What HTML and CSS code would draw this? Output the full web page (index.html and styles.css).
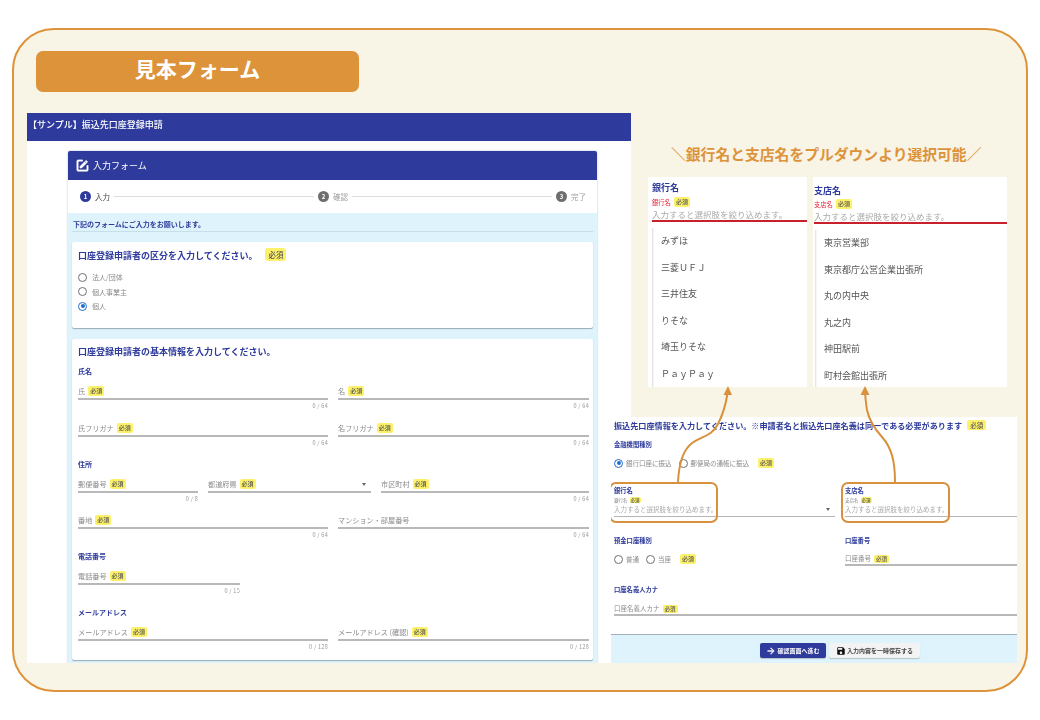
FILE: index.html
```html
<!DOCTYPE html>
<html lang="ja">
<head>
    <meta charset="UTF-8">
    <title>見本フォーム</title>
    <link rel="stylesheet" href="styles.css">
</head>
<body>
    <div class="slide">
        <h1 class="slide-title">見本フォーム</h1>

        <!-- 左: 入力フォーム全体 -->
        <section class="shot form-shot">
            <header class="app-bar">【サンプル】振込先口座登録申請</header>
            <div class="app-body">
                <div class="form-card">
                    <div class="form-card-head">
                        <svg viewBox="0 0 24 24" fill="currentColor" stroke="currentColor" stroke-width="1"><path d="M5,3C3.89,3 3,3.89 3,5V19A2,2 0 0,0 5,21H19A2,2 0 0,0 21,19V12H19V19H5V5H12V3H5M17.78,4C17.61,4 17.43,4.07 17.3,4.2L16.08,5.41L18.58,7.91L19.8,6.7C20.06,6.44 20.06,6 19.8,5.75L18.25,4.2C18.12,4.07 17.95,4 17.78,4M15.37,6.12L8,13.5V16H10.5L17.87,8.62L15.37,6.12Z"/></svg>
                        <span>入力フォーム</span>
                    </div>
                    <div class="stepper">
                        <span class="step-no active">1</span><span class="step-label active">入力</span>
                        <span class="step-line"></span>
                        <span class="step-no">2</span><span class="step-label">確認</span>
                        <span class="step-line"></span>
                        <span class="step-no">3</span><span class="step-label">完了</span>
                    </div>
                    <div class="form-area">
                        <p class="form-lead">下記のフォームにご入力をお願いします。</p>

                        <div class="sheet sheet-kind">
                            <h2 class="sheet-title">口座登録申請者の区分を入力してください。<span class="badge badge-lg">必須</span></h2>
                            <div class="radio-stack">
                                <label class="radio"><i class="dot"></i>法人/団体</label>
                                <label class="radio"><i class="dot"></i>個人事業主</label>
                                <label class="radio"><i class="dot on"></i>個人</label>
                            </div>
                        </div>

                        <div class="sheet sheet-basic">
                            <h2 class="sheet-title">口座登録申請者の基本情報を入力してください。</h2>

                            <h3 class="group-title">氏名</h3>
                            <div class="row row-2">
                                <div class="field"><div class="field-input">氏<span class="badge">必須</span></div><div class="count">0 / 64</div></div>
                                <div class="field"><div class="field-input">名<span class="badge">必須</span></div><div class="count">0 / 64</div></div>
                                <div class="field"><div class="field-input">氏フリガナ<span class="badge">必須</span></div><div class="count">0 / 64</div></div>
                                <div class="field"><div class="field-input">名フリガナ<span class="badge">必須</span></div><div class="count">0 / 64</div></div>
                            </div>

                            <h3 class="group-title">住所</h3>
                            <div class="row row-3">
                                <div class="field"><div class="field-input">郵便番号<span class="badge">必須</span></div><div class="count">0 / 8</div></div>
                                <div class="field"><div class="field-input select">都道府県<span class="badge">必須</span><i class="caret"></i></div></div>
                                <div class="field"><div class="field-input">市区町村<span class="badge">必須</span></div><div class="count">0 / 64</div></div>
                            </div>
                            <div class="row row-2">
                                <div class="field"><div class="field-input">番地<span class="badge">必須</span></div><div class="count">0 / 64</div></div>
                                <div class="field"><div class="field-input">マンション・部屋番号</div><div class="count">0 / 64</div></div>
                            </div>

                            <h3 class="group-title">電話番号</h3>
                            <div class="row row-tel">
                                <div class="field"><div class="field-input">電話番号<span class="badge">必須</span></div><div class="count">0 / 15</div></div>
                            </div>

                            <h3 class="group-title">メールアドレス</h3>
                            <div class="row row-2">
                                <div class="field"><div class="field-input">メールアドレス<span class="badge">必須</span></div><div class="count">0 / 128</div></div>
                                <div class="field"><div class="field-input">メールアドレス (確認)<span class="badge">必須</span></div><div class="count">0 / 128</div></div>
                            </div>
                        </div>
                    </div>
                </div>
            </div>
        </section>

        <p class="caption">＼銀行名と支店名をプルダウンより選択可能／</p>

        <!-- 右上: プルダウン -->
        <section class="shot drop-shot bank-drop">
            <h3 class="drop-title">銀行名</h3>
            <div class="drop-label">銀行名<span class="badge">必須</span></div>
            <div class="drop-input">入力すると選択肢を絞り込めます。</div>
            <ul class="drop-list">
                <li>みずほ</li>
                <li>三菱ＵＦＪ</li>
                <li>三井住友</li>
                <li>りそな</li>
                <li>埼玉りそな</li>
                <li>ＰａｙＰａｙ</li>
            </ul>
        </section>
        <section class="shot drop-shot branch-drop">
            <h3 class="drop-title">支店名</h3>
            <div class="drop-label">支店名<span class="badge">必須</span></div>
            <div class="drop-input">入力すると選択肢を絞り込めます。</div>
            <ul class="drop-list">
                <li>東京営業部</li>
                <li>東京都庁公営企業出張所</li>
                <li>丸の内中央</li>
                <li>丸之内</li>
                <li>神田駅前</li>
                <li>町村会館出張所</li>
            </ul>
        </section>

        <!-- 右下: 振込先口座 -->
        <section class="shot account-shot">
            <h2 class="account-title">振込先口座情報を入力してください。※申請者名と振込先口座名義は同一である必要があります<span class="badge">必須</span></h2>
            <h3 class="mini-title">金融機関種別</h3>
            <div class="radio-line">
                <label class="radio"><i class="dot on"></i>銀行口座に振込</label>
                <label class="radio"><i class="dot"></i>郵便局の通帳に振込</label>
                <span class="badge">必須</span>
            </div>
            <div class="account-grid bank-row">
                <div class="pick">
                    <h3 class="mini-title">銀行名</h3>
                    <div class="pick-label">銀行名<span class="badge">必須</span></div>
                    <div class="pick-input select">入力すると選択肢を絞り込めます。<i class="caret"></i></div>
                </div>
                <div class="pick">
                    <h3 class="mini-title">支店名</h3>
                    <div class="pick-label">支店名<span class="badge">必須</span></div>
                    <div class="pick-input">入力すると選択肢を絞り込めます。</div>
                </div>
            </div>
            <div class="account-grid number-row">
                <div>
                    <h3 class="mini-title">預金口座種別</h3>
                    <div class="radio-line">
                        <label class="radio"><i class="dot"></i>普通</label>
                        <label class="radio"><i class="dot"></i>当座</label>
                        <span class="badge">必須</span>
                    </div>
                </div>
                <div>
                    <h3 class="mini-title">口座番号</h3>
                    <div class="field-input small">口座番号<span class="badge">必須</span></div>
                </div>
            </div>
            <div class="holder-row">
                <h3 class="mini-title">口座名義人カナ</h3>
                <div class="field-input small">口座名義人カナ<span class="badge">必須</span></div>
            </div>
            <div class="account-foot">
                <button class="btn btn-primary">
                    <svg viewBox="0 0 24 24" fill="currentColor" stroke="currentColor" stroke-width="1"><path d="M12 4l-1.41 1.41L16.17 11H4v2h12.17l-5.58 5.59L12 20l8-8z"/></svg>確認画面へ進む
                </button>
                <button class="btn btn-plain">
                    <svg viewBox="0 0 24 24" fill="#111"><path d="M17 3H5c-1.11 0-2 .9-2 2v14c0 1.1.89 2 2 2h14c1.1 0 2-.9 2-2V7l-4-4zm-5 16c-1.66 0-3-1.34-3-3s1.34-3 3-3 3 1.34 3 3-1.34 3-3 3zm3-10H5V5h10v4z"/></svg>入力内容を一時保存する
                </button>
            </div>
            <span class="callout callout-bank"></span>
            <span class="callout callout-branch"></span>
        </section>

        <!-- 吹き出しの矢印 -->
        <svg class="arrows" viewBox="0 0 1040 720" fill="none" stroke="#d8913c" stroke-width="2">
            <path d="M678 482C679 462 683 450 692 443C702 436 712 436 718 424C723 414 726 404 727.500 393"/>
            <path d="M895 482C895 462 892 448 882 437C874 428 869 420 867 410C866 404 865.500 398 865 393"/>
            <path d="M728 386L723.500 395L732 395Z" fill="#d8913c" stroke="none"/>
            <path d="M865 386L860.500 395L869.500 395Z" fill="#d8913c" stroke="none"/>
        </svg>
    </div>
</body>
</html>
```

FILE: styles.css
```css
:root {
    --orange: #dd933a;
    --navy: #2e3b9c;
    --paper: #f8f4e6;
    --sky: #dff3fc;
    --gray: #8a8a8a;
    --yellow: #fdf16a;
}

* {
    margin: 0;
    padding: 0;
    box-sizing: border-box;
}

body {
    background: #fff;
    font-family: "Noto Sans CJK JP", "Noto Sans", sans-serif;
    color: var(--gray);
}

ul {
    list-style: none;
}

/* スライド枠 */
.slide {
    position: relative;
    width: 1016px;
    height: 664px;
    margin: 28px 0 0 12px;
    padding: 21px 0 0 22px;
    background: var(--paper);
    border: 2px solid var(--orange);
    border-radius: 42px;
}

.slide-title {
    width: 323px;
    height: 41px;
    line-height: 35px;
    background: var(--orange);
    border-radius: 7px;
    color: #fff;
    font-size: 21px;
    font-weight: 700;
    text-align: center;
}

/* 貼り付けたスクリーンショットは少しぼけている */
.shot {
    position: absolute;
    background: #fff;
    overflow: hidden;
    filter: blur(0.3px);
}

.form-shot {
    left: 13px;
    top: 83px;
    width: 604px;
    height: 550px;
}

.bank-drop {
    left: 634px;
    top: 147px;
    width: 159px;
    height: 210px;
}

.branch-drop {
    left: 799px;
    top: 147px;
    width: 194px;
    height: 210px;
}

.account-shot {
    left: 597px;
    top: 387px;
    width: 406px;
    height: 246px;
}

.caption {
    position: absolute;
    left: 657px;
    top: 114px;
    font-size: 14.800px;
    line-height: 20px;
    font-weight: 700;
    color: var(--orange);
    white-space: nowrap;
}

.arrows {
    position: absolute;
    left: -14px;
    top: -30px;
    width: 1040px;
    height: 720px;
    pointer-events: none;
}

/* 必須バッジ */
.badge {
    display: inline-block;
    height: 10px;
    line-height: 10px;
    margin-left: 3px;
    padding: 0 2px;
    background: var(--yellow);
    border-radius: 2px;
    color: #555;
    font-size: 6px;
    font-weight: 500;
    letter-spacing: 0;
    vertical-align: 1px;
}

.badge-lg {
    height: 13px;
    line-height: 13px;
    margin-left: 8px;
    padding: 0 3px;
    font-size: 7.500px;
    border-radius: 3px;
}

/* 左のフォーム */
.app-bar {
    height: 28px;
    padding-left: 1px;
    line-height: 24px;
    background: var(--navy);
    color: #fff;
    font-size: 9px;
    font-weight: 500;
}

.app-body {
    padding: 10px 34px 0 41px;
}

.form-card {
    box-shadow: 0 0 2px rgba(46, 59, 156, 0.4);
    border-radius: 2px 2px 0 0;
}

.form-card-head {
    display: flex;
    align-items: center;
    gap: 3px;
    height: 29px;
    padding-left: 7px;
    background: var(--navy);
    border-radius: 2px 2px 0 0;
    color: #fff;
    font-size: 9px;
}

.form-card-head svg {
    width: 15px;
    height: 15px;
}

.stepper {
    display: flex;
    align-items: center;
    height: 33px;
    padding: 0 11px 0 12px;
}

.step-no {
    width: 11px;
    height: 11px;
    line-height: 11px;
    border-radius: 50%;
    background: #6e6e6e;
    color: #fff;
    font-size: 6px;
    font-weight: 700;
    text-align: center;
}

.step-no.active {
    background: var(--navy);
}

.step-label {
    margin-left: 4px;
    font-size: 7.500px;
    color: #a0a0a0;
}

.step-label.active {
    color: #444;
}

.step-line {
    flex: 1;
    height: 1px;
    margin: 0 4px;
    background: #ddd;
}

.form-area {
    height: 500px;
    padding: 0 4px;
    background: var(--sky);
}

.form-lead {
    height: 19px;
    padding-left: 1px;
    line-height: 23px;
    border-bottom: 1px solid #c9dfe8;
    color: var(--navy);
    font-size: 7px;
    font-weight: 700;
}

.sheet {
    padding: 6px 4px 0 6px;
    background: #fff;
    border-radius: 2px;
    box-shadow: 0 1px 1px rgba(60, 80, 100, 0.45);
}

.sheet-kind {
    height: 86px;
    margin-top: 10px;
}

.sheet-basic {
    height: 321px;
    margin-top: 11px;
}

.sheet-title {
    height: 14px;
    line-height: 14px;
    color: var(--navy);
    font-size: 9px;
    font-weight: 700;
}

.radio-stack {
    display: flex;
    flex-direction: column;
    gap: 2.500px;
    margin-top: 9px;
}

.radio {
    display: inline-flex;
    align-items: center;
    gap: 5px;
    height: 12px;
    font-size: 7px;
    color: var(--gray);
}

.dot {
    position: relative;
    width: 9px;
    height: 9px;
    border: 1px solid #6f6f6f;
    border-radius: 50%;
}

.dot.on {
    border-color: #1f6fd0;
}

.dot.on::after {
    content: "";
    position: absolute;
    inset: 1.500px;
    border-radius: 50%;
    background: #1f6fd0;
}

.group-title {
    height: 12px;
    line-height: 12px;
    margin: -1.500px 0 9px;
    color: var(--navy);
    font-size: 7px;
    font-weight: 700;
}

.sheet-title + .group-title {
    margin-top: 6px;
}

.row {
    display: grid;
    column-gap: 10px;
}

.row-2 {
    grid-template-columns: 250px 251px;
}

.row-3 {
    grid-template-columns: 120px 163px 208px;
}

.row-tel {
    grid-template-columns: 162px;
}

.field {
    height: 36.500px;
}

.field-input {
    position: relative;
    height: 14px;
    line-height: 11px;
    border-bottom: 2px solid #b8b8b8;
    font-size: 7.150px;
    color: var(--gray);
    white-space: nowrap;
}

.caret {
    position: absolute;
    right: 5px;
    top: 4px;
    border: 2.500px solid transparent;
    border-top: 3px solid #666;
    border-bottom: 0;
}

.count {
    margin-top: 2px;
    font-size: 5.500px;
    line-height: 8px;
    text-align: right;
    color: #9a9a9a;
    letter-spacing: 0.3px;
}

/* プルダウン */
.drop-shot {
    padding: 4px 0 0 4px;
}

.branch-drop {
    padding: 7px 0 0 1px;
}

.drop-title {
    height: 14px;
    line-height: 14px;
    color: var(--navy);
    font-size: 9px;
    font-weight: 700;
}

.drop-label {
    height: 11px;
    margin-top: 2px;
    line-height: 11px;
    color: #e3243a;
    font-size: 6.300px;
}

.branch-drop .drop-label {
    margin-top: 1px;
}

.drop-input {
    height: 14px;
    line-height: 12px;
    border-bottom: 2px solid #c8202a;
    color: #aaa;
    font-size: 8.500px;
    white-space: nowrap;
}

.drop-list {
    padding-left: 9px;
    box-shadow: inset 2px 0 2px -1px #dcdcdc;
    color: #555;
    font-size: 9px;
    height: 170px;
}

.branch-drop .drop-list {
    margin-left: 1px;
}

.drop-list li {
    height: 26.500px;
    line-height: 26.500px;
    white-space: nowrap;
}

.drop-list li:first-child {
    margin-top: 6px;
}

/* 振込先口座 */
.account-shot {
    padding: 2px 0 0 3px;
}

.account-title {
    height: 14px;
    line-height: 14px;
    color: var(--navy);
    font-size: 8.120px;
    font-weight: 700;
    white-space: nowrap;
}

.account-title .badge {
    margin-left: 5px;
    padding: 0 3px;
    font-size: 6.500px;
}

.mini-title {
    height: 10px;
    line-height: 10px;
    color: var(--navy);
    font-size: 6.300px;
    font-weight: 700;
}

.account-title + .mini-title {
    margin-top: 7px;
}

.radio-line {
    display: flex;
    align-items: center;
    gap: 7px;
    height: 12px;
    margin-top: 7px;
}

.radio-line .radio {
    gap: 3px;
    font-size: 6.500px;
}

.radio-line .badge {
    margin-left: 2px;
    vertical-align: 0;
}

.account-grid {
    display: grid;
    grid-template-columns: 221px 172px;
    column-gap: 10px;
}

.bank-row {
    margin-top: 17px;
}

.pick-label {
    height: 9px;
    line-height: 9px;
    color: #888;
    font-size: 4.500px;
}

.pick-label .badge {
    height: 6px;
    line-height: 6px;
    padding: 0 1px;
    font-size: 4.500px;
    vertical-align: 0;
    margin-left: 2px;
}

.pick-input {
    position: relative;
    height: 12px;
    line-height: 9px;
    border-bottom: 1px solid #b4b4b4;
    color: #aaa;
    font-size: 6.500px;
    white-space: nowrap;
}

.pick-input .caret {
    top: 3px;
}

.number-row {
    margin-top: 19px;
}

.number-row .field-input {
    margin-top: 6px;
}

.number-row .radio-line {
    margin-top: 7px;
}

.field-input.small {
    line-height: 13px;
    font-size: 6.500px;
}

.field-input.small .badge {
    height: 8px;
    line-height: 8px;
    font-size: 5.500px;
    vertical-align: 0;
}

.holder-row {
    margin-top: 19px;
}

.holder-row .field-input {
    margin-top: 7px;
}

.account-foot {
    position: absolute;
    left: 0;
    right: 0;
    bottom: 0;
    display: flex;
    gap: 3px;
    height: 29px;
    padding: 8px 0 0 149px;
    background: var(--sky);
    border-top: 1px solid #9fb2bd;
}

.btn {
    display: inline-flex;
    align-items: center;
    justify-content: center;
    gap: 1px;
    height: 15px;
    border: none;
    border-radius: 2px;
    font-family: inherit;
    font-size: 6px;
    font-weight: 700;
    box-shadow: 0 1px 1px rgba(0, 0, 0, 0.2);
}

.btn svg {
    width: 10px;
    height: 10px;
}

.btn-primary {
    width: 66px;
    background: var(--navy);
    color: #fff;
}

.btn-plain {
    width: 91px;
    background: #f3f3f3;
    color: #444;
}

.callout {
    position: absolute;
    top: 65px;
    width: 109px;
    height: 41px;
    border: 2px solid #d8913c;
    border-radius: 7px;
}

.callout-bank {
    left: -2px;
}

.callout-branch {
    left: 230px;
}
```
